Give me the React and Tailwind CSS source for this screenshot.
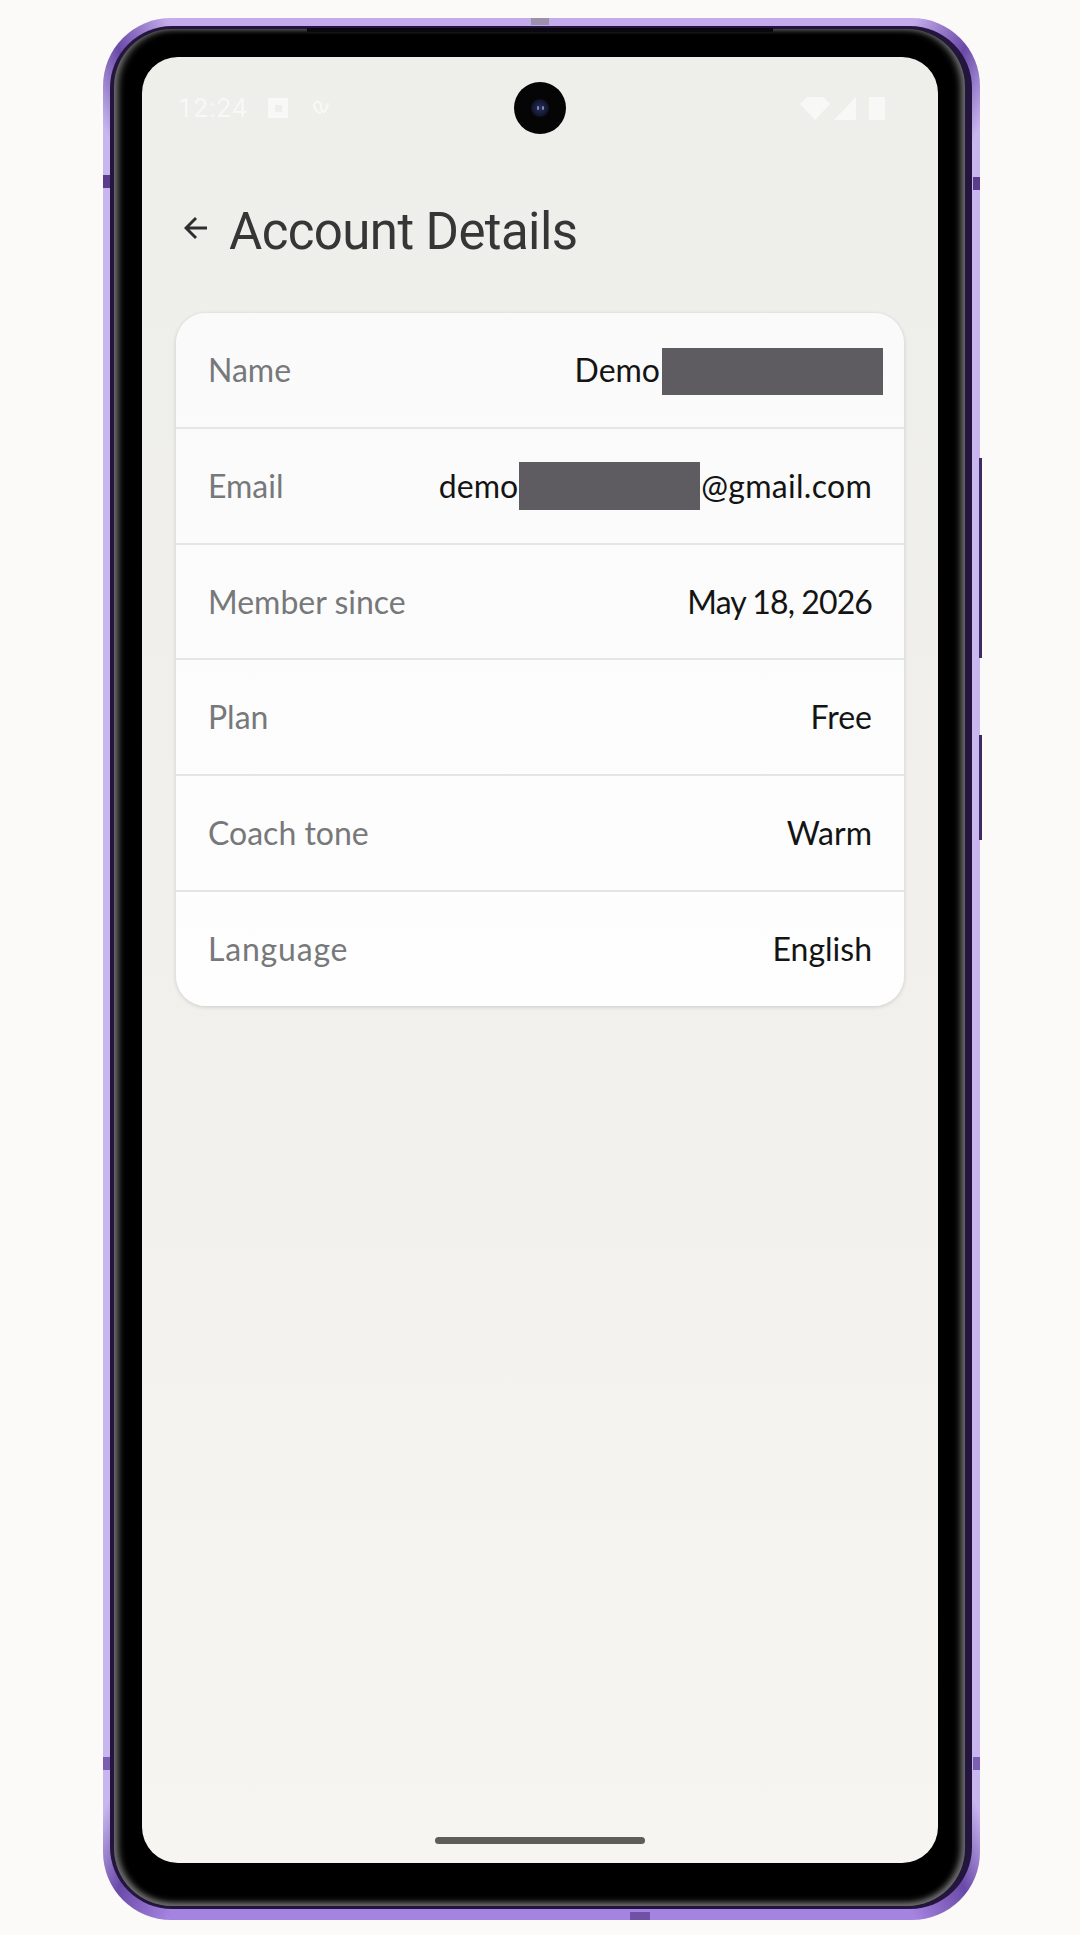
import React from "react";

const rows = [
  { label: "Name", value: <><span>Demo</span><span className="w-[221px] h-[47px] ml-[2px] -mr-[11px] mt-[4px] bg-[#5f5c61]" /></> },
  { label: "Email", value: <><span>demo</span><span className="w-[181px] h-[48px] mx-[1px] bg-[#5f5c61]" /><span className="tracking-[0.3px]">@gmail.com</span></> },
  { label: "Member since", value: <span className="tracking-[-0.9px]">May 18, 2026</span> },
  { label: "Plan", value: <span>Free</span> },
  { label: "Coach tone", value: <span>Warm</span> },
  { label: "Language", value: <span>English</span>, labelClass: "tracking-[0.8px]" },
];

export default function App() {
  return (
    <div className="w-[1080px] h-[1935px] bg-[#fbfaf8] pt-[18px] pl-[103px] overflow-hidden">
      <div className="relative w-[877px] h-[1902px] rounded-[68px] bg-[conic-gradient(from_0deg,#c4acec_0deg,#c4acec_21.5deg,#6a4aa8_24.7deg,#c8b6ef_27.5deg,#c8b6ef_152.5deg,#6a4aa8_155.3deg,#a583e0_158.5deg,#a583e0_201.5deg,#6a4aa8_204.7deg,#c8b6ef_207.5deg,#c8b6ef_332.5deg,#6a4aa8_335.3deg,#c4acec_338.5deg,#c4acec_360deg)] pt-[8px] pl-[7px] pr-[8px] pb-[11px]">
        {/* frame marks */}
        <div className="absolute left-[204px] top-[10px] w-[466px] h-[4px] bg-[#0a0710]" />
        <div className="absolute left-[428px] top-0 w-[18px] h-[7px] bg-[#9d90ad]" />
        <div className="absolute left-[527px] bottom-0 w-[20px] h-[8px] bg-[#7150a8]" />
        <div className="absolute left-0 top-[157px] w-[7px] h-[13px] bg-[#5c3d8c]" />
        <div className="absolute right-0 top-[159px] w-[7px] h-[13px] bg-[#5c3d8c]" />
        <div className="absolute left-0 bottom-[150px] w-[7px] h-[13px] bg-[#7c5fb0]" />
        <div className="absolute right-0 bottom-[150px] w-[7px] h-[13px] bg-[#7c5fb0]" />
        <div className="absolute -right-[2px] top-[440px] w-[3px] h-[200px] bg-[#3f2a63]" />
        <div className="absolute -right-[2px] top-[717px] w-[3px] h-[105px] bg-[#3f2a63]" />

        <div className="h-full rounded-[62px] bg-[#24153f] pt-[3px] pl-[4px] pr-[7px] pb-[3px]">
          <div className="h-full rounded-[58px] bg-black pt-[28px] pl-[28px] pr-[27px] pb-[43px] shadow-[inset_5px_0_7px_-1px_#6f6f6f,inset_-5px_0_7px_-1px_#6f6f6f,inset_0_-4px_7px_-1px_#6f6f6f]">
            <div className="relative flex flex-col h-full rounded-[36px] overflow-hidden bg-gradient-to-b from-[#eeeeeb] via-[#f1f0ed] to-[#f6f5f2] font-['Lato',sans-serif]">
              {/* status bar */}
              <div className="flex items-center justify-between h-[24px] mt-[39px] pl-[36px] pr-[53px]">
                <div className="flex items-center">
                  <span className="text-[26px] leading-none font-['Roboto',sans-serif] tracking-[1px] w-[90px] text-[#f8f8f6]">12:24</span>
                  <span className="w-[20px] h-[20px] bg-[#f8f8f6] flex items-center justify-center">
                    <span className="w-[7px] h-[7px] bg-[#eeeeeb]" />
                  </span>
                  <svg viewBox="0 0 20 20" className="w-[22px] h-[20px] ml-[22px]" fill="none" stroke="#f8f8f6" strokeWidth="2">
                    <path d="M3 6c3-4 7-2 7 2s2 7 3 6 4-6 4-9M3 6c0 5 3 9 7 9" />
                  </svg>
                </div>
                <div className="flex items-center">
                  <svg viewBox="0 0 30 23" className="w-[30px] h-[23px]" fill="#f8f8f6">
                    <path d="M0 7 7 0h16l7 7-15 16z" />
                  </svg>
                  <svg viewBox="0 0 22 23" className="w-[22px] h-[23px] ml-[4px]" fill="#f8f8f6">
                    <path d="M0 23 22 0v23z" />
                  </svg>
                  <span className="w-[16px] h-[23px] ml-[13px] bg-[#f8f8f6] rounded-[1px]" />
                </div>
              </div>

              {/* camera */}
              <div className="absolute left-[372px] top-[25px] w-[52px] h-[52px] rounded-full bg-[#050506] flex items-center justify-center">
                <span className="w-[18px] h-[18px] rounded-full bg-[radial-gradient(circle,#28305c_0%,#141833_55%,#050506_100%)] flex items-center justify-center gap-[3px]">
                  <span className="w-[2px] h-[4px] bg-[#7c86b8] rounded-full" />
                  <span className="w-[2px] h-[4px] bg-[#7c86b8] rounded-full" />
                </span>
              </div>

              {/* header */}
              <div className="flex items-center h-[60px] mt-[81px] pl-[42px]">
                <svg viewBox="0 0 24 24" className="w-[24px] h-[24px] -mt-[6px] text-[#2f2f2f]" fill="none" stroke="currentColor" strokeWidth="3">
                  <path d="M23 12H3M12 2 2 12 12 22" />
                </svg>
                <h1 className="ml-[21px] text-[51px] leading-none tracking-[-0.6px] font-['Roboto',sans-serif] font-normal text-[#363636]">
                  Account Details
                </h1>
              </div>

              {/* card */}
              <div className="flex flex-col h-[693px] mt-[52px] mx-[34px] rounded-[30px] bg-gradient-to-b from-[#fafafa] to-[#fefefe] shadow-[0_1px_4px_rgba(0,0,0,0.16)]">
                {rows.map((r, i) => (
                  <div
                    key={r.label}
                    className={`flex-1 flex items-center justify-between pl-[32px] pr-[32px] text-[32px] ${i < rows.length - 1 ? "border-b-2 border-[#e4e5e5]" : ""}`}
                  >
                    <span className={`text-[#77787a] ${r.labelClass || ""}`}>{r.label}</span>
                    <div className="flex items-center text-[#141414]">{r.value}</div>
                  </div>
                ))}
              </div>

              {/* home indicator */}
              <div className="mt-auto mb-[19px] mx-auto w-[210px] h-[7px] rounded-full bg-[#5f5d5a]" />
            </div>
          </div>
        </div>
      </div>
    </div>
  );
}
